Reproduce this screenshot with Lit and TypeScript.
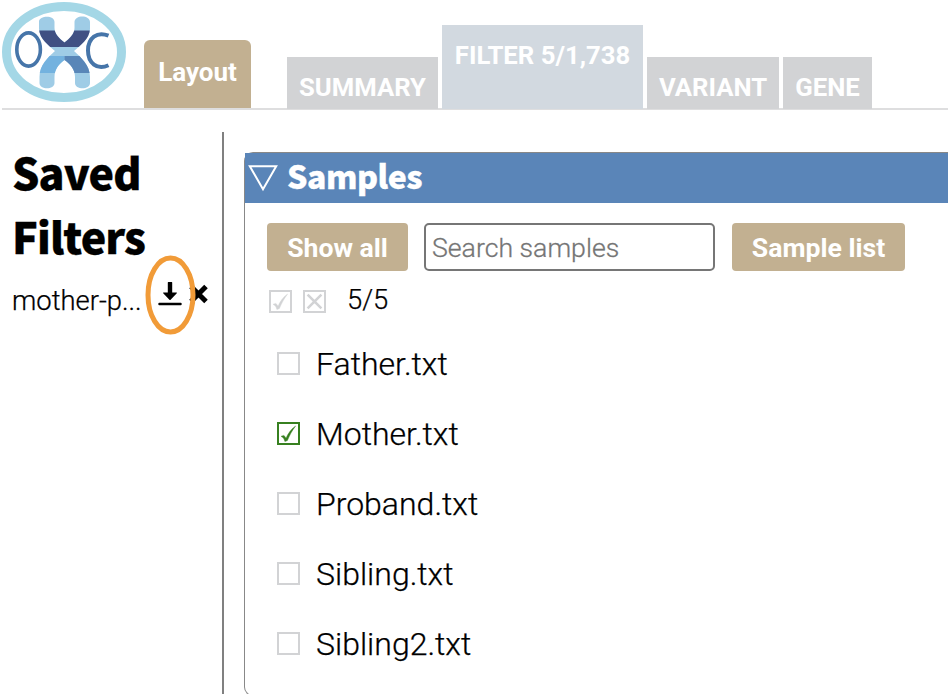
import { LitElement, html, css, svg, nothing } from "lit";
import { customElement, property, state } from "lit/decorators.js";

type Mark = "none" | "check" | "cross";

@customElement("check-box")
class CheckBox extends LitElement {
  @property() mark: Mark = "none";

  static styles = css`
    :host { display: block; width: 23px; height: 23px; flex: none; color: #d2d3d5; }
    :host([active]) { color: #378020; }
    svg { display: block; }
  `;

  render() {
    return html`<svg width="23" height="23" viewBox="0 0 23 23" fill="none" stroke="currentColor">
      <rect x="1" y="1" width="21" height="21" stroke-width="2" />
      ${this.mark === "check"
        ? svg`<path d="M4 14.3 6.800 13.400C7.800 14 8.500 15 9 16.200 11 11.600 14 7.200 18.600 4 14.800 9 12.400 13.700 10.400 18.600L7.900 19.600C7.200 17 6.200 15.300 4 14.300Z" fill="currentColor" stroke="currentColor" stroke-width="0.4" />`
        : nothing}
      ${this.mark === "cross"
        ? svg`<path d="M4.600 4.600 18.400 18.400M18.400 4.600 4.600 18.400" stroke-width="2.600" />`
        : nothing}
    </svg>`;
  }
}

@customElement("app-logo")
class AppLogo extends LitElement {
  static styles = css`
    :host { display: block; width: 124px; height: 100px; flex: none; }
    svg { display: block; }
  `;

  render() {
    return html`<svg width="124" height="100" viewBox="2 2 124 100">
      <defs>
        <clipPath id="chromosome">
          <path d="M39 21.500C39 15.500 54.500 14.500 54.500 22V28C54.500 34 59.500 38.500 64.500 42.500 69.500 38.500 74.500 34 74.500 28V22C74.500 14.500 90 14.500 90 22V29C89.500 39 80 45.500 74 51 81 57.500 90 65 90 77V83C90 90 75 90 75 83V77C75 69 70 64 64.500 60 59 64 54.500 69 54.500 77V83C54.500 90 39.500 90 39.500 83V77C39.500 65 48 57.500 55 51 49 45.500 39.500 39 39 29Z" />
        </clipPath>
      </defs>
      <ellipse cx="64" cy="52" rx="57.500" ry="45.500" fill="#fff" stroke="#a4d7e6" stroke-width="9" />
      <g clip-path="url(#chromosome)">
        <rect x="38" y="15" width="54" height="74" fill="#9fcce6" />
        <rect x="38" y="30.500" width="54" height="16.500" fill="#405083" />
        <rect x="38" y="56" width="26.500" height="17" fill="#73b2df" />
        <rect x="64.500" y="56" width="27" height="17" fill="#5986b8" />
      </g>
      <ellipse cx="28.600" cy="49.500" rx="11.800" ry="16.600" fill="none" stroke="#4675a9" stroke-width="3.600" />
      <path d="M108.500 35.700C97 31 88 38 88 50.500 88 63 97 70.500 108.500 65.300" fill="none" stroke="#4675a9" stroke-width="4" />
    </svg>`;
  }
}

@customElement("app-root")
class AppRoot extends LitElement {
  @state() private samples = [
    { name: "Father.txt", on: false },
    { name: "Mother.txt", on: true },
    { name: "Proband.txt", on: false },
    { name: "Sibling.txt", on: false },
    { name: "Sibling2.txt", on: false },
  ];

  static styles = css`
    :host {
      display: flex;
      flex-direction: column;
      box-sizing: border-box;
      height: 694px;
      overflow: hidden;
      background: #fff;
      color: #000;
      font-family: Roboto, sans-serif;
      font-weight: 300;
    }
    * { box-sizing: border-box; }
    button { border: 0; padding: 0; font: 700 26.600px/30px Roboto, sans-serif; color: #fff; background: #c2b091; white-space: nowrap; }

    .topbar { display: flex; height: 110px; margin-left: 2px; padding-top: 2px; border-bottom: 2px solid #dededf; flex: none; }
    .layout { align-self: flex-end; width: 107px; height: 68px; margin-left: 18px; padding-bottom: 4px; border-radius: 6px 6px 0 0; font-size: 26px; }
    .tabs { display: flex; align-items: flex-end; gap: 4px; margin: 0 0 -1px 36px; }
    .tab { height: 52px; padding-top: 15px; background: #d2d3d5; color: #fff; font: 700 25.700px/30px Roboto, sans-serif; text-align: center; white-space: nowrap; }
    .tab.active { height: 84px; background: #d2d9e0; }
    .summary { width: 151px; }
    .filter { width: 201px; }
    .variant { width: 132px; }
    .gene { width: 89px; }

    .body { display: flex; flex: 1; padding-top: 22px; min-height: 0; }
    .sidebar { width: 224px; padding: 7px 0 0 12px; border-right: 2px solid #808080; flex: none; }
    h1 { margin: 0; font: 900 43px/64px "Noto Sans CJK SC", sans-serif; letter-spacing: -0.900px; -webkit-text-stroke: 0.300px #000; }
    .saved { display: flex; align-items: center; height: 44px; margin-top: 11px; }
    .saved-name { width: 132px; font-size: 27.400px; line-height: 34px; white-space: nowrap; padding-top: 2px; -webkit-text-stroke: 0.250px #000; }
    .actions { position: relative; display: flex; align-items: center; margin: -12px 0 0 14px; height: 44px; }
    .icon { display: block; flex: none; }
    .highlight { position: absolute; left: -13px; top: -17px; }

    .panel { flex: 1; height: 544px; margin: 20px 0 0 20px; border: 1px solid #888; border-right: 0; border-radius: 9px 0 0 9px; }
    .panel-head { display: flex; align-items: center; height: 50px; padding-left: 3px; background: #5a85b8; color: #fff; gap: 9px; }
    h2 { margin: -7px 0 0; font: 900 32px/50px "Noto Sans CJK SC", sans-serif; letter-spacing: -0.480px; -webkit-text-stroke: 0.300px #fff; }
    .tools { display: flex; margin: 20px 0 0 22px; height: 48px; }
    .tools button { border-radius: 4px; padding-top: 1px; }
    .show { width: 141px; }
    .list { width: 173px; }
    input { width: 291px; height: 48px; margin: 0 17px 0 16px; padding: 1px 6px 0; border: 2px solid #767676; border-radius: 5px; font: 300 26.700px Roboto, sans-serif; background: #fff; }
    input::placeholder { color: #757575; opacity: 1; -webkit-text-stroke: 0.300px #757575; }
    .summary-row { display: flex; align-items: center; height: 33px; margin: 14px 0 0 24px; gap: 11px; }
    .count { margin: -3px 0 0 10px; font-size: 27.400px; line-height: 32px; -webkit-text-stroke: 0.250px #000; }
    .samples { margin: 11px 0 0 32px; padding: 0; list-style: none; }
    .samples li { display: flex; align-items: center; height: 70px; gap: 16px; font-size: 32px; line-height: 40px; -webkit-text-stroke: 0.250px #000; }
    .samples check-box { margin-bottom: 1px; }
  `;

  render() {
    return html`
      <header class="topbar">
        <app-logo></app-logo>
        <button class="layout">Layout</button>
        <nav class="tabs">
          <div class="tab summary">SUMMARY</div>
          <div class="tab filter active">FILTER 5/1,738</div>
          <div class="tab variant">VARIANT</div>
          <div class="tab gene">GENE</div>
        </nav>
      </header>
      <div class="body">
        <aside class="sidebar">
          <h1>Saved<br />Filters</h1>
          <div class="saved">
            <span class="saved-name">mother-p...</span>
            <div class="actions">
              <svg class="icon" width="24" height="26" viewBox="0 0 24 26">
                <path d="M9.800 1.500Q9.800 1 10.300 1H13.700Q14.200 1 14.200 1.500V11.500H18.500Q19.300 11.600 18.800 12.200L12.600 18.700Q12 19.200 11.400 18.700L5.200 12.200Q4.700 11.600 5.500 11.500H9.800Z" />
                <rect x="0.300" y="21.800" width="23.400" height="2.400" rx="1" />
              </svg>
              <svg class="icon" width="28" height="22" viewBox="0 0 28 22">
                <path d="M9 3.500 24 18.500M24 3.500 9 18.500" stroke="#000" stroke-width="5" />
              </svg>
              <svg class="highlight" width="52" height="80" viewBox="0 0 52 80">
                <ellipse cx="25.500" cy="40" rx="22.500" ry="37" fill="none" stroke="#f19b38" stroke-width="5" />
              </svg>
            </div>
          </div>
        </aside>
        <section class="panel">
          <div class="panel-head">
            <svg class="icon" width="30" height="28" viewBox="0 0 30 28">
              <path d="M1.800 2.300H28.200L15 25.200Z" fill="none" stroke="#fff" stroke-width="2" />
            </svg>
            <h2>Samples</h2>
          </div>
          <div class="tools">
            <button class="show">Show all</button>
            <input placeholder="Search samples" />
            <button class="list">Sample list</button>
          </div>
          <div class="summary-row">
            <check-box mark="check"></check-box>
            <check-box mark="cross"></check-box>
            <span class="count">5/5</span>
          </div>
          <ul class="samples">
            ${this.samples.map(
              (s) => html`<li>
                <check-box mark=${s.on ? "check" : "none"} ?active=${s.on}></check-box>
                <span>${s.name}</span>
              </li>`
            )}
          </ul>
        </section>
      </div>
    `;
  }
}
